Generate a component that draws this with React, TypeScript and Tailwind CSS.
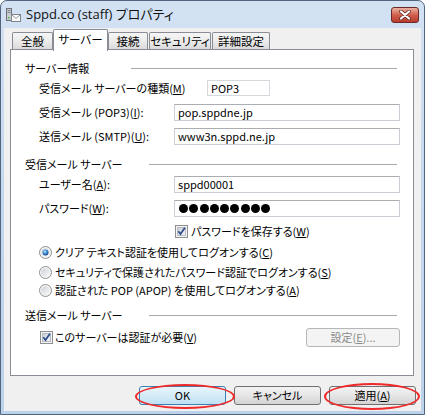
import React from 'react';

const ui = "font-['Noto_Sans_CJK_JP','Liberation_Sans',sans-serif] [font-feature-settings:'palt']";

const K = ({ children }: { children: React.ReactNode }) => (
  <span className="underline underline-offset-[1px] decoration-1">{children}</span>
);

const Check = ({ id }: { id: string }) => (
  <svg width="13" height="13" viewBox="0 0 13 13" className="shrink-0">
    <defs>
      <linearGradient id={id} x1="0" y1="0" x2="1" y2="1">
        <stop offset="0" stopColor="#c9ced6" />
        <stop offset="1" stopColor="#f7f8f9" />
      </linearGradient>
    </defs>
    <rect x="0.5" y="0.5" width="12" height="12" fill="#f4f4f4" stroke="#8e8f8f" />
    <rect x="2.5" y="2.5" width="8" height="8" fill={`url(#${id})`} stroke="#b7bcc2" />
    <path d="M3.3 6.3l2.2 2.8 4.4-6.4" fill="none" stroke="#2e4c8c" strokeWidth="1.7" />
  </svg>
);

const Radio = ({ id, on }: { id: string; on?: boolean }) => (
  <svg width="13" height="13" viewBox="0 0 13 13" className="shrink-0">
    <defs>
      <linearGradient id={`${id}o`} x1="0" y1="0" x2="1" y2="1">
        <stop offset="0" stopColor="#cdd1d6" />
        <stop offset="1" stopColor="#f9f9f9" />
      </linearGradient>
      <radialGradient id={`${id}d`} cx="0.4" cy="0.35" r="0.7">
        <stop offset="0" stopColor="#b5e2ff" />
        <stop offset="0.6" stopColor="#2f7ac6" />
        <stop offset="1" stopColor="#173f78" />
      </radialGradient>
    </defs>
    <circle cx="6.5" cy="6.5" r="6" fill="#f5f5f5" stroke="#8e8f8f" />
    <circle cx="6.5" cy="6.5" r="4.3" fill={`url(#${id}o)`} />
    {on && <circle cx="6.5" cy="6.5" r="3" fill={`url(#${id}d)`} />}
  </svg>
);

const Field = ({ children, w = 'w-[226px]', ro }: { children?: React.ReactNode; w?: string; ro?: boolean }) => (
  <div
    className={`${w} h-full bg-white border flex items-center pl-[3px] leading-none ${
      ro ? 'border-[#d5d8dc]' : 'border-[#c9cdd4] border-t-[#abadb3]'
    }`}
  >
    {children}
  </div>
);

const Group = ({ label, lw, mt }: { label: string; lw: string; mt: string }) => (
  <div className={`flex items-center h-[15px] pl-[14px] ${mt}`}>
    <div className={`${lw} shrink-0 leading-none`}>{label}</div>
    <div className="flex-1 mr-[16px] h-px bg-[#a9a9a9]" />
  </div>
);

const Row = ({ label, mt, children }: { label: React.ReactNode; mt: string; children: React.ReactNode }) => (
  <div className={`flex items-center h-[17px] pl-[28px] ${mt}`}>
    <div className="w-[135px] shrink-0 leading-none">{label}</div>
    {children}
  </div>
);

const Tab = ({ label, w, ml, active }: { label: string; w: string; ml: string; active?: boolean }) => (
  <div
    className={`${w} ${ml} shrink-0 flex items-center justify-center border border-b-0 border-[#898c95] rounded-t-[2px] leading-none text-[11.5px] ${
      active
        ? 'h-[22px] -mb-px relative z-10 bg-white pb-[2px]'
        : 'h-[18px] bg-linear-to-b from-[#f5f5f5] via-[#ebebeb] to-[#d8d8d8]'
    }`}
  >
    {label}
  </div>
);

const Btn = ({ children, def, disabled, w = 'w-[87px]' }: { children: React.ReactNode; def?: boolean; disabled?: boolean; w?: string }) => (
  <div
    className={`${w} h-[19px] rounded-[3px] border flex items-center justify-center leading-none ${
      def
        ? 'border-[#3c7fb1] bg-linear-to-b from-[#e8f5fc] via-[#d5ecf8] to-[#bfe1f4]'
        : disabled
        ? 'border-[#b3b7ba] bg-[#f4f4f4] text-[#8a8a8a]'
        : 'border-[#707070] bg-linear-to-b from-[#f3f3f3] via-[#e6e6e6] to-[#d3d3d3]'
    }`}
  >
    {children}
  </div>
);

const Dots = () => (
  <div className="flex gap-[1.3px] pl-[1px]">
    {Array.from({ length: 9 }).map((_, i) => (
      <span key={i} className="w-[9px] h-[9px] rounded-full bg-black" />
    ))}
  </div>
);

export default function App() {
  return (
    <div className={`w-[425px] h-[415px] relative text-[11px] text-black bg-white whitespace-nowrap ${ui}`}>
      <div className="w-[425px] h-[415px] flex flex-col rounded-t-[7px] border border-[#51657e] bg-linear-to-b from-[#d3e2f3] via-[#c4d7ee] to-[#bcd2ea]">
        {/* title bar */}
        <div className="h-[27px] shrink-0 flex items-center pl-[4px] pr-[4px]">
          <svg width="16" height="16" viewBox="0 0 16 16" className="shrink-0">
            <rect x="1.5" y="1.5" width="5" height="12" fill="#c9cdd2" stroke="#6c7177" />
            <rect x="2.5" y="3" width="3" height="1" fill="#7d8287" />
            <rect x="2.5" y="5" width="3" height="1" fill="#7d8287" />
            <rect x="3" y="10" width="1.5" height="1.5" fill="#3fbf3f" />
            <rect x="6.5" y="7.5" width="9" height="7" fill="#fbfbfb" stroke="#7e848b" />
            <path d="M6.8 7.8l4.2 3.6 4.2-3.6" fill="none" stroke="#8d939a" />
          </svg>
          <div className="ml-[5px] text-[13px] leading-none font-['Open_Sans','Noto_Sans_CJK_JP',sans-serif] [font-feature-settings:'palt'] text-[#111]">
            Sppd.co (staff) プロパティ
          </div>
          <div className="ml-auto mr-[1px] w-[28px] h-[16px] rounded-[3px] border border-[#6b2a25] bg-linear-to-b from-[#eab1a2] via-[#d05e4c] to-[#b83c2e] flex items-center justify-center">
            <svg width="14" height="10" viewBox="0 0 14 10">
              <path d="M3 1.5l8 7M11 1.5l-8 7" stroke="#5a2420" strokeWidth="3.6" strokeLinecap="round" />
              <path d="M3 1.5l8 7M11 1.5l-8 7" stroke="#ffffff" strokeWidth="2.2" strokeLinecap="round" />
            </svg>
          </div>
        </div>

        {/* client */}
        <div className="flex-1 mx-[3px] mb-[3px] bg-[#f0f0f0] flex flex-col">
          <div className="h-[22px] pt-px flex items-end">
            <Tab label="全般" w="w-[41px]" ml="ml-[8px]" />
            <Tab label="サーバー" w="w-[55px]" ml="ml-0" active />
            <Tab label="接続" w="w-[40px]" ml="ml-0" />
            <Tab label="セキュリティ" w="w-[62px]" ml="ml-[1px]" />
            <Tab label="詳細設定" w="w-[58px]" ml="ml-[1px]" />
          </div>

          <div className="ml-[6px] w-[404px] h-[327px] border border-[#898c95] bg-white flex flex-col -mt-px">
            <Group label="サーバー情報" lw="w-[106px]" mt="mt-[11px]" />
            <div className="flex items-center h-[16px] pl-[28px] mt-[4px]">
              <div className="w-[168px] shrink-0 leading-none">
                受信メール サーバーの種類(<K>M</K>)
              </div>
              <Field w="w-[63px]" ro>
                POP3
              </Field>
            </div>
            <Row label={<>受信メール (POP3)(<K>I</K>):</>} mt="mt-[8px]">
              <Field>pop.sppdne.jp</Field>
            </Row>
            <Row label={<>送信メール (SMTP)(<K>U</K>):</>} mt="mt-[7px]">
              <Field>www3n.sppd.ne.jp</Field>
            </Row>

            <Group label="受信メール サーバー" lw="w-[124px]" mt="mt-[12px]" />
            <Row label={<>ユーザー名(<K>A</K>):</>} mt="mt-[4px]">
              <Field>sppd00001</Field>
            </Row>
            <Row label={<>パスワード(<K>W</K>):</>} mt="mt-[7px]">
              <Field>
                <Dots />
              </Field>
            </Row>
            <div className="flex items-center h-[14px] pl-[164px] mt-[7px] gap-[3px]">
              <Check id="cb1" />
              <span className="leading-none">
                パスワードを保存する(<K>W</K>)
              </span>
            </div>
            <div className="flex items-center h-[14px] pl-[28px] mt-[7px] gap-[3px]">
              <Radio id="r1" on />
              <span className="leading-none">
                クリア テキスト認証を使用してログオンする(<K>C</K>)
              </span>
            </div>
            <div className="flex items-center h-[14px] pl-[28px] mt-[6px] gap-[3px]">
              <Radio id="r2" />
              <span className="leading-none">
                セキュリティで保護されたパスワード認証でログオンする(<K>S</K>)
              </span>
            </div>
            <div className="flex items-center h-[14px] pl-[28px] mt-[4px] gap-[3px]">
              <Radio id="r3" />
              <span className="leading-none">
                認証された POP (APOP) を使用してログオンする(<K>A</K>)
              </span>
            </div>

            <Group label="送信メール サーバー" lw="w-[124px]" mt="mt-[11px]" />
            <div className="flex items-center h-[19px] pl-[29px] pr-[13px] mt-[5px] gap-[2px]">
              <Check id="cb2" />
              <span className="leading-none">
                このサーバーは認証が必要(<K>V</K>)
              </span>
              <div className="ml-auto">
                <Btn disabled w="w-[94px]">
                  設定(<K>E</K>)...
                </Btn>
              </div>
            </div>
          </div>

          <div className="flex justify-end gap-[8px] pr-[5px] mt-[10px]">
            <Btn def>OK</Btn>
            <Btn>キャンセル</Btn>
            <Btn>
              適用(<K>A</K>)
            </Btn>
          </div>
        </div>
      </div>

      {/* red annotation ellipses */}
      <div className="absolute left-[135px] top-[384px] w-[100px] h-[25px] rounded-[50%] border-2 border-[#ee2a2a]" />
      <div className="absolute left-[324px] top-[383px] w-[96px] h-[27px] rounded-[50%] border-2 border-[#ee2a2a]" />
    </div>
  );
}
